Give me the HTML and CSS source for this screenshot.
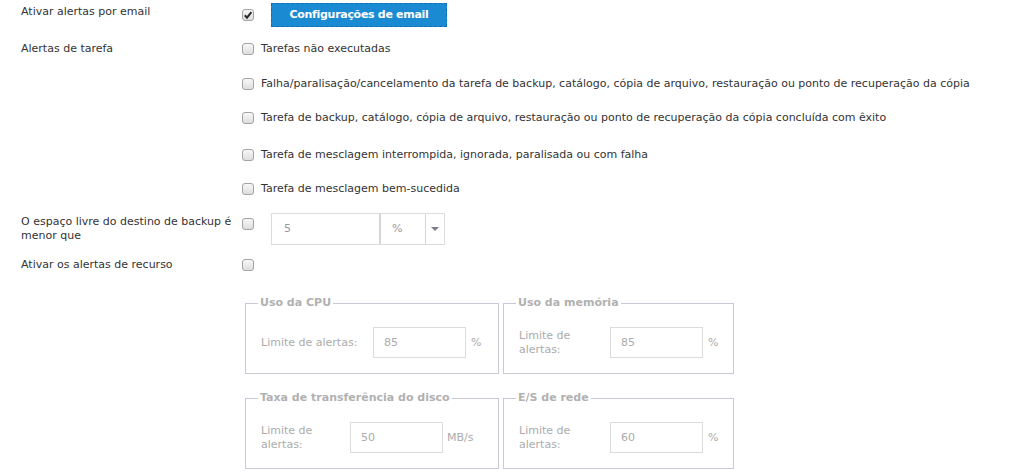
FILE: index.html
```html
<!DOCTYPE html>
<html lang="pt">
<head>
<meta charset="utf-8">
<title>Alertas</title>
<link rel="stylesheet" href="styles.css">
</head>
<body>
<div class="page">
  <div class="row row-email">
    <div class="label label-email">Ativar alertas por email</div>
    <div class="ctrl">
      <span class="cb checked"><svg width="10" height="10" viewBox="0 0 10 10"><path d="M1.8 5.2 L4 7.6 L8.4 2.2" fill="none" stroke="#2a2a2a" stroke-width="2"/></svg></span>
      <button class="btn">Configurações de email</button>
    </div>
  </div>

  <div class="row row-task">
    <div class="label">Alertas de tarefa</div>
    <ul class="opts">
      <li class="opt"><span class="cb"></span><span>Tarefas não executadas</span></li>
      <li class="opt"><span class="cb"></span><span>Falha/paralisação/cancelamento da tarefa de backup, catálogo, cópia de arquivo, restauração ou ponto de recuperação da cópia</span></li>
      <li class="opt"><span class="cb"></span><span>Tarefa de backup, catálogo, cópia de arquivo, restauração ou ponto de recuperação da cópia concluída com êxito</span></li>
      <li class="opt"><span class="cb"></span><span>Tarefa de mesclagem interrompida, ignorada, paralisada ou com falha</span></li>
      <li class="opt"><span class="cb"></span><span>Tarefa de mesclagem bem-sucedida</span></li>
    </ul>
  </div>

  <div class="row row-space">
    <div class="label label-wrap">O espaço livre do destino de backup é menor que</div>
    <div class="ctrl ctrl-top">
      <span class="cb cb-top"></span>
      <div class="combo">
        <span class="combo-val">5</span>
        <span class="combo-unit">%</span>
        <span class="combo-btn"><span class="arrow"></span></span>
      </div>
    </div>
  </div>

  <div class="row row-res">
    <div class="label">Ativar os alertas de recurso</div>
    <div class="ctrl"><span class="cb"></span></div>
  </div>

  <div class="groups">
    <fieldset class="grp">
      <legend>Uso da CPU</legend>
      <div class="grp-body">
        <span class="lim lim-cpu">Limite de alertas:</span>
        <span class="num">85</span>
        <span class="unit">%</span>
      </div>
    </fieldset>
    <fieldset class="grp">
      <legend>Uso da memória</legend>
      <div class="grp-body">
        <span class="lim lim-mem">Limite de alertas:</span>
        <span class="num">85</span>
        <span class="unit">%</span>
      </div>
    </fieldset>
    <fieldset class="grp">
      <legend>Taxa de transferência do disco</legend>
      <div class="grp-body">
        <span class="lim lim-disk">Limite de alertas:</span>
        <span class="num">50</span>
        <span class="unit unit-mb">MB/s</span>
      </div>
    </fieldset>
    <fieldset class="grp">
      <legend>E/S de rede</legend>
      <div class="grp-body">
        <span class="lim lim-mem">Limite de alertas:</span>
        <span class="num">60</span>
        <span class="unit">%</span>
      </div>
    </fieldset>
  </div>
</div>
</body>
</html>
```

FILE: styles.css
```css
html, body {
  margin: 0;
  padding: 0;
  background: #ffffff;
}

body {
  font-family: "DejaVu Sans", "Liberation Sans", sans-serif;
  font-size: 11px;
  line-height: 14px;
  color: #333333;
}

.page {
  padding: 3px 0 0 21px;
}

.row {
  display: grid;
  grid-template-columns: 221px auto;
}

.label {
  color: #333333;
}

.ctrl {
  display: flex;
  align-items: center;
}

.ctrl-top {
  align-items: flex-start;
}

/* checkbox */
.cb {
  box-sizing: border-box;
  width: 12px;
  height: 12px;
  flex: none;
  border: 1px solid #a3a3a3;
  border-radius: 3px;
  background: linear-gradient(#f7f7f7, #dedede);
  display: inline-flex;
  align-items: center;
  justify-content: center;
}

.cb svg {
  display: block;
}

/* row 1 */
.row-email {
  height: 24px;
  align-items: center;
}

.label-email {
  align-self: start;
  padding-top: 2px;
}

.btn {
  margin-left: 17px;
  width: 176px;
  height: 24px;
  padding: 0;
  border: 1px dashed #0d70b3;
  background: #1a8bd3;
  color: #ffffff;
  font-family: "DejaVu Sans", "Liberation Sans", sans-serif;
  font-weight: bold;
  font-size: 11px;
  line-height: 14px;
  letter-spacing: -0.3px;
}

/* task alerts */
.row-task {
  margin-top: 15px;
}

.opts {
  list-style: none;
  margin: 0;
  padding: 0;
  display: flex;
  flex-direction: column;
  gap: 20px;
}

.opt {
  display: flex;
  align-items: center;
  gap: 7px;
  min-height: 14px;
}

.opt:first-child {
  margin-bottom: 1px;
}

.opt:nth-child(3) {
  margin-bottom: 3px;
}

/* free space */
.row-space {
  margin-top: 17px;
  align-items: center;
}

.label-wrap {
  padding-right: 4px;
}

.cb-top {
  margin-top: 5px;
}

.combo {
  margin-left: 17px;
  box-sizing: border-box;
  width: 174px;
  height: 32px;
  border: 1px solid #dcdcdc;
  display: flex;
  color: #9a9a9a;
}

.combo-val {
  box-sizing: border-box;
  width: 109px;
  padding-left: 12px;
  display: flex;
  align-items: center;
  border-right: 2px solid #d6d6d6;
}

.combo-unit {
  box-sizing: border-box;
  width: 45px;
  padding-left: 11px;
  display: flex;
  align-items: center;
  border-right: 1px solid #d6d6d6;
}

.combo-btn {
  flex: 1;
  display: flex;
  align-items: center;
  justify-content: center;
}

.arrow {
  width: 0;
  height: 0;
  border-left: 4px solid transparent;
  border-right: 4px solid transparent;
  border-top: 4px solid #7a7f87;
}

/* resource */
.row-res {
  margin-top: 13px;
  align-items: center;
}

/* groups */
.groups {
  margin: 24px 0 0 224px;
  display: grid;
  grid-template-columns: 254px 231px;
  column-gap: 4px;
  row-gap: 17px;
}

.grp {
  margin: 0;
  padding: 17px 15px 15px 15px;
  border: 1px solid #c9c9d6;
  min-width: 0;
}

.grp legend {
  margin-left: -3px;
  padding: 0 2px;
  font-weight: bold;
  color: #b1b1b1;
  line-height: 14px;
}

.grp-body {
  display: flex;
  align-items: center;
  height: 31px;
  color: #ababab;
}

.lim {
  flex: none;
  box-sizing: border-box;
  padding-right: 6px;
}

.lim-cpu {
  width: 112px;
}

.lim-mem {
  width: 91px;
}

.lim-disk {
  width: 89px;
}

.num {
  box-sizing: border-box;
  width: 93px;
  height: 31px;
  border: 1px solid #dcdcdc;
  padding-left: 10px;
  display: flex;
  align-items: center;
  flex: none;
}

.unit {
  margin-left: 5px;
}

.unit-mb {
  margin-left: 4px;
}
```
